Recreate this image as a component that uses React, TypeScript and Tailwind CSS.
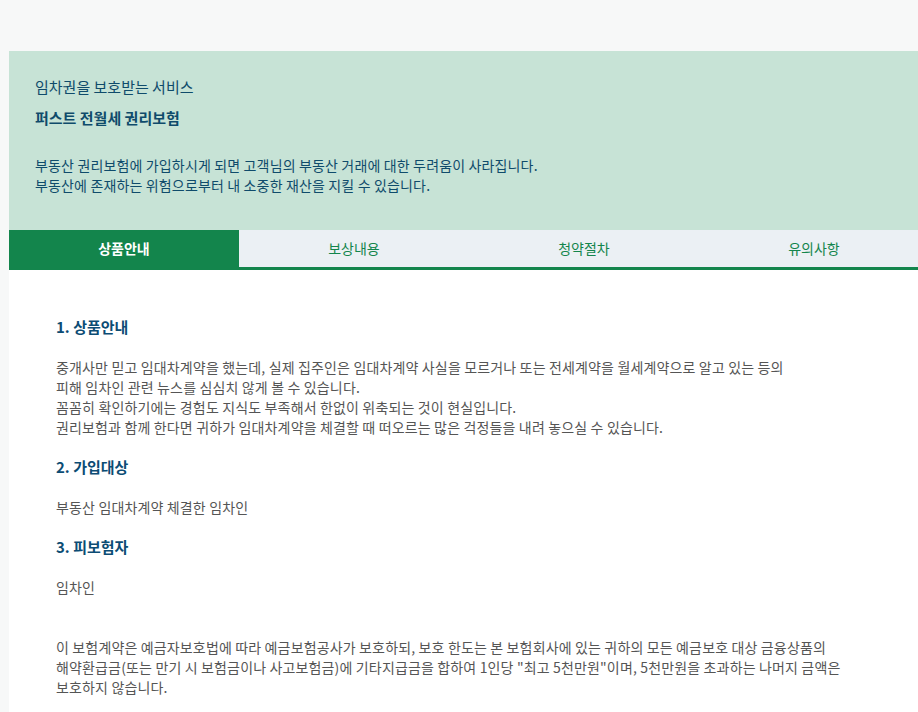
import { useState } from 'react'

const tabs = ['상품안내', '보상내용', '청약절차', '유의사항']

function Section({ title, children }: { title: string; children: React.ReactNode }) {
  return (
    <div>
      <h3 className="text-[15px] font-bold leading-[20px] text-[#0c4c74]">{title}</h3>
      <div className="mt-5 text-[14px] leading-[20px] tracking-[0.15px] text-[#555]">{children}</div>
    </div>
  )
}

export default function App() {
  const [active, setActive] = useState(0)

  return (
    <div
      className="min-h-[712px] w-full overflow-hidden bg-[#f7f8f8] pt-[51px] pl-[9px]"
      style={{ fontFamily: '"Noto Sans CJK KR", "Noto Sans", sans-serif' }}
    >
      <div className="w-[920px]">
        {/* 상단 소개 영역 */}
        <div className="bg-[#c7e3d6] pl-[26px] pt-[26px] pb-[35px] text-[#0f4b6b]">
          <p className="text-[15px] leading-[20px]">임차권을 보호받는 서비스</p>
          <h1 className="mt-[11px] text-[15px] font-bold leading-[20px]">퍼스트 전월세 권리보험</h1>
          <p className="mt-[27px] text-[14px] leading-[20px] tracking-[0.15px]">
            부동산 권리보험에 가입하시게 되면 고객님의 부동산 거래에 대한 두려움이 사라집니다.
            <br />
            부동산에 존재하는 위험으로부터 내 소중한 재산을 지킬 수 있습니다.
          </p>
        </div>

        {/* 탭 */}
        <div className="grid grid-cols-4 border-b-[3px] border-[#13854c]">
          {tabs.map((t, i) => (
            <button
              key={t}
              onClick={() => setActive(i)}
              className={
                i === active
                  ? 'h-[37px] bg-[#13854c] text-[14px] font-bold text-white'
                  : 'h-[37px] bg-[#ebf0f4] text-[14px] text-[#13854c]'
              }
            >
              {t}
            </button>
          ))}
        </div>

        {/* 본문 */}
        <div className="min-h-[442px] bg-white pl-[47px] pt-[47px] pb-10">
          <div className="space-y-5">
            <Section title="1. 상품안내">
              <p>
                중개사만 믿고 임대차계약을 했는데, 실제 집주인은 임대차계약 사실을 모르거나 또는 전세계약을 월세계약으로 알고 있는 등의
                <br />
                피해 임차인 관련 뉴스를 심심치 않게 볼 수 있습니다.
                <br />
                꼼꼼히 확인하기에는 경험도 지식도 부족해서 한없이 위축되는 것이 현실입니다.
                <br />
                권리보험과 함께 한다면 귀하가 임대차계약을 체결할 때 떠오르는 많은 걱정들을 내려 놓으실 수 있습니다.
              </p>
            </Section>
            <Section title="2. 가입대상">
              <p>부동산 임대차계약 체결한 임차인</p>
            </Section>
            <Section title="3. 피보험자">
              <p>임차인</p>
            </Section>
          </div>
          <p className="mt-10 text-[14px] leading-[20px] tracking-[0.15px] text-[#555]">
            이 보험계약은 예금자보호법에 따라 예금보험공사가 보호하되, 보호 한도는 본 보험회사에 있는 귀하의 모든 예금보호 대상 금융상품의
            <br />
            해약환급금(또는 만기 시 보험금이나 사고보험금)에 기타지급금을 합하여 1인당 "최고 5천만원"이며, 5천만원을 초과하는 나머지 금액은
            <br />
            보호하지 않습니다.
          </p>
        </div>
      </div>
    </div>
  )
}
